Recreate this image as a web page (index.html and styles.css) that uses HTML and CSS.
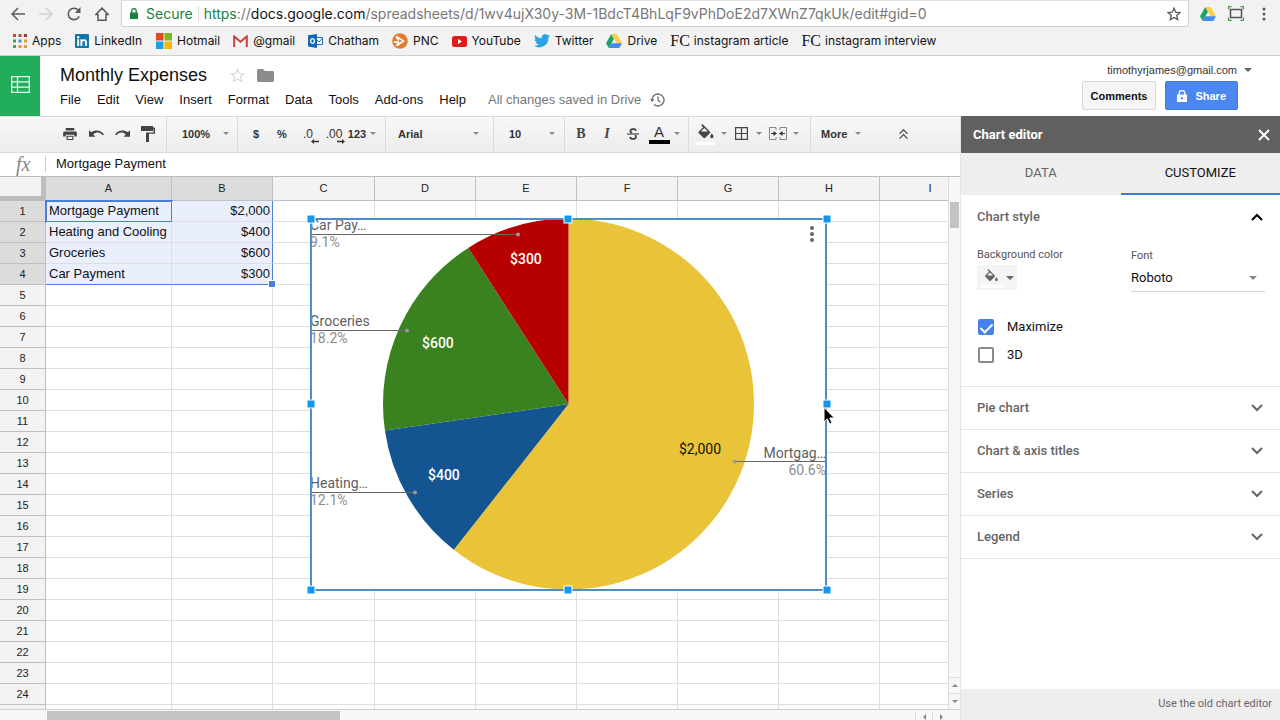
FILE: index.html
```html
<!DOCTYPE html>
<html lang="en">
<head>
<meta charset="utf-8">
<title>Monthly Expenses</title>
<link rel="stylesheet" href="styles.css">
</head>
<body>
<svg class="sprite" aria-hidden="true">
  <symbol id="i-drive" viewBox="0 0 16 14">
    <path fill="#1fa463" d="M5.3 0 0 9.2 2.7 14 8 4.7z"/>
    <path fill="#fdcf44" d="M5.3 0h5.4L16 9.2h-5.4z"/>
    <path fill="#4688f4" d="M2.7 14 5.4 9.2H16L13.3 14z"/>
  </symbol>
  <symbol id="i-down" viewBox="0 0 8 4"><path fill="currentColor" d="M0 0h8L4 4z"/></symbol>
  <symbol id="i-fill" viewBox="0 0 24 24"><path fill="currentColor" d="M16.6 9 7.6 0 6.200 1.400l2.400 2.400-5.200 5.100c-.6.6-.6 1.500 0 2.100l5.500 5.500c.3.3.7.5 1.100.5s.8-.2 1.100-.5l5.500-5.500c.5-.6.5-1.500 0-2zM5.800 9 10 4.800 14.200 9H5.800zM19 11.500s-2 2.200-2 3.500a2 2 0 0 0 4 0c0-1.300-2-3.500-2-3.500z"/></symbol>
  <symbol id="i-chev" viewBox="0 0 12 8"><path fill="none" stroke="currentColor" stroke-width="2" d="M1 1l5 5 5-5"/></symbol>
</svg>

<header class="browser">
  <div class="nav">
    <button class="plain" aria-label="Back"><svg width="14" height="14" viewBox="0 0 14 14"><path fill="none" stroke="#5a5a5a" stroke-width="1.500" d="M14 7H1M7 1 1 7l6 6"/></svg></button>
    <button class="plain" aria-label="Forward"><svg width="14" height="14" viewBox="0 0 14 14"><path fill="none" stroke="#d2d2d2" stroke-width="1.500" d="M0 7h13M7 1l6 6-6 6"/></svg></button>
    <button class="plain" aria-label="Reload"><svg width="14" height="14" viewBox="0 0 14 14"><path fill="none" stroke="#5a5a5a" stroke-width="1.600" d="M12.200 9.300A5.700 5.700 0 1 1 11.300 3.200"/><path fill="#5a5a5a" d="M13.500 0v6H7.800z"/></svg></button>
    <button class="plain" aria-label="Home"><svg width="14" height="14" viewBox="0 0 14 14"><path fill="none" stroke="#5a5a5a" stroke-width="1.500" d="M.8 7.600 7 1.200l6.200 6.400H11v5.600H3V7.600z"/></svg></button>
  </div>
  <div class="omnibox">
    <svg width="8" height="11" viewBox="0 0 8 11"><path fill="#1a8040" d="M0 4.500h8V11H0z"/><path fill="none" stroke="#1a8040" stroke-width="1.300" d="M1.800 5V2.800a2.200 2.200 0 0 1 4.400 0V5"/></svg>
    <span class="secure">Secure</span>
    <div class="url" role="textbox" contenteditable="true" aria-label="Address"><span class="scheme">https</span>://<span class="host">docs.google.com</span>/spreadsheets/d/1wv4ujX30y-3M-1BdcT4BhLqF9vPhDoE2d7XWnZ7qkUk/edit#gid=0</div>
    <button class="plain" aria-label="Bookmark this page"><svg width="14" height="14" viewBox="0 0 14 14"><path fill="none" stroke="#5a5a5a" stroke-width="1.300" d="M7 1.200l1.700 4 4.200.4-3.200 2.800 1 4.200L7 10.400l-3.700 2.200 1-4.200L1.100 5.600l4.200-.4z"/></svg></button>
  </div>
  <div class="extensions">
    <button class="plain" aria-label="Drive"><svg width="16" height="14"><use href="#i-drive"/></svg></button>
    <button class="plain" aria-label="Capture"><svg width="16" height="15" viewBox="0 0 16 15"><path fill="none" stroke="#555" stroke-width="1.500" d="M2.500 3.500h11v8h-11z"/><path fill="none" stroke="#3f9a3f" stroke-width="1.200" d="M.6 3.500V.6h3M12.400.6h3v2.900M.6 11.500v2.900h3M12.400 14.400h3v-2.900"/></svg></button>
    <button class="plain" aria-label="Browser menu"><svg width="4" height="14" viewBox="0 0 4 14"><g fill="#555"><circle cx="2" cy="2" r="1.500"/><circle cx="2" cy="7" r="1.500"/><circle cx="2" cy="12" r="1.500"/></g></svg></button>
  </div>
</header>

<nav class="bookmarks" aria-label="Bookmarks">
  <a href="#"><svg width="14" height="14" viewBox="0 0 14 14"><g fill="#d0453a"><path d="M0 0h3v3H0zM5.500 0h3v3h-3z"/><path fill="#a8323e" d="M11 0h3v3h-3z"/></g><path fill="#3f9f5f" d="M0 5.500h3v3H0z"/><path fill="#4a8ac6" d="M5.500 5.500h3v3h-3z"/><path fill="#e09a35" d="M11 5.500h3v3h-3zM5.500 11h3v3h-3zM11 11h3v3h-3z"/><path fill="#4f9f62" d="M0 11h3v3H0z"/></svg>Apps</a>
  <a href="#"><svg width="14" height="14" viewBox="0 0 14 14"><rect width="14" height="14" rx="1" fill="#0e76a8"/><path fill="#fff" d="M2.200 5.300h2V12h-2zM5.400 5.300h1.900v.9c.8-1.600 4.600-1.600 4.600 1.600V12h-2V8.400c0-2-2.500-1.900-2.500 0V12h-2z"/><circle cx="3.200" cy="3.200" r="1.200" fill="#fff"/></svg>LinkedIn</a>
  <a href="#"><svg width="16" height="16" viewBox="0 0 16 16"><path fill="#dd4b20" d="M0 0h7.500v7.500H0z"/><path fill="#7cb81e" d="M8.500 0H16v7.500H8.500z"/><path fill="#1ba1e2" d="M0 8.500h7.500V16H0z"/><path fill="#fbb506" d="M8.500 8.500H16V16H8.500z"/></svg>Hotmail</a>
  <a href="#"><svg width="15" height="12" viewBox="0 0 15 12"><path fill="#f4f4f4" d="M1 1h13v10H1z"/><path fill="none" stroke="#cf3d3a" stroke-width="2" d="M1.200 12V1.500l6.300 5.300 6.300-5.300V12"/></svg>@gmail</a>
  <a href="#"><svg width="15" height="14" viewBox="0 0 15 14"><path fill="#fff" stroke="#1a6fbd" d="M7 3.500h7.500v7H7z"/><path fill="none" stroke="#1a6fbd" d="M9 6l2 2 3.500-4"/><path fill="#1068b5" d="M0 1.300 9 0v14L0 12.500z"/><ellipse cx="4.500" cy="7" rx="1.900" ry="2.300" fill="none" stroke="#fff" stroke-width="1.300"/></svg>Chatham</a>
  <a href="#"><svg width="16" height="16" viewBox="0 0 16 16"><circle cx="8" cy="8" r="7.800" fill="#e27b2c"/><path fill="#fff" d="M4.500 2.800 13 8l-8 5.500-1.300-1.800L6.500 10H1.800V8.300h5L3.500 4.600z"/><path fill="#e27b2c" d="M6.800 6 10 8l-3 2z"/></svg>PNC</a>
  <a href="#"><svg width="15" height="11" viewBox="0 0 15 11"><rect width="15" height="11" rx="2.500" fill="#e01b1b"/><path fill="#fff" d="M6 3v5l4-2.500z"/></svg>YouTube</a>
  <a href="#"><svg width="16" height="14" viewBox="0 0 16 14"><path fill="#2aa3e8" d="M16 1.700c-.6.300-1.200.5-1.900.5.7-.4 1.200-1 1.400-1.800-.6.4-1.300.6-2.100.8A3.300 3.300 0 0 0 7.800 4.300C5.100 4.200 2.700 2.900 1.100.9c-.9 1.500-.4 3.400 1 4.400-.5 0-1-.2-1.500-.4 0 1.600 1.100 2.900 2.600 3.200-.5.100-1 .1-1.500 0 .4 1.300 1.600 2.300 3.100 2.300A6.600 6.600 0 0 1 0 11.800a9.300 9.300 0 0 0 14.400-8.300c.6-.5 1.200-1.100 1.600-1.800z"/></svg>Twitter</a>
  <a href="#"><svg width="16" height="14"><use href="#i-drive"/></svg>Drive</a>
  <a href="#"><span class="fc">FC</span>instagram article</a>
  <a href="#"><span class="fc">FC</span>instagram interview</a>
</nav>

<section class="doc">
  <a class="logo" href="#" aria-label="Sheets home"><svg width="19" height="17" viewBox="0 0 19 17"><path fill="none" stroke="#e8fff0" stroke-width="1.300" d="M.7.7h17.600v15.600H.7zM.7 5.900h17.600M.7 11.100h17.600M6.500.7v15.600"/></svg></a>
  <div class="doc-main">
    <div class="title-row">
      <input class="title" aria-label="Document title" value="Monthly Expenses">
      <button class="plain" aria-label="Star"><svg width="15" height="15" viewBox="0 0 14 14"><path fill="none" stroke="#d4d4d4" d="M7 1l1.500 4.200 4.500.2-3.500 2.800 1.200 4.400L7 10.100l-3.700 2.500 1.200-4.400L1 5.400l4.500-.2z"/></svg></button>
      <button class="plain" aria-label="Move to folder"><svg width="17" height="13" viewBox="0 0 17 13"><path fill="#8c8c8c" d="M1.500 0H6l2 2h7.500c.8 0 1.500.6 1.500 1.400v8.200c0 .8-.7 1.400-1.500 1.400h-14C.7 13 0 12.400 0 11.600V1.400C0 .6.700 0 1.500 0z"/></svg></button>
    </div>
    <div class="menus">
      <button class="plain">File</button><button class="plain">Edit</button><button class="plain">View</button><button class="plain">Insert</button><button class="plain">Format</button><button class="plain">Data</button><button class="plain">Tools</button><button class="plain">Add-ons</button><button class="plain">Help</button>
      <span class="saved">All changes saved in Drive <svg width="15" height="14" viewBox="0 0 15 14"><path fill="none" stroke="#6b6b6b" stroke-width="1.300" d="M2 7.500a6 6 0 1 1 2 4M8 3.500V7.200l2.500 2"/><path fill="#6b6b6b" d="M0 6.200h4.500L2.200 9z"/></svg></span>
    </div>
  </div>
  <div class="account">
    <button class="plain email">timothyrjames@gmail.com<svg width="8" height="4"><use href="#i-down"/></svg></button>
    <div class="account-actions">
      <button class="btn">Comments</button>
      <button class="btn share"><svg width="10" height="12" viewBox="0 0 10 12"><path fill="#fff" fill-rule="evenodd" d="M0 4.500h10V12H0zM5 7a1.200 1.200 0 1 0 .1 0z"/><path fill="none" stroke="#fff" stroke-width="1.300" d="M2.200 5V3.200a2.800 2.500 0 0 1 5.600 0V5"/></svg>Share</button>
    </div>
  </div>
</section>

<main class="work">
  <section class="editor">
    <div class="toolbar" role="toolbar">
      <div class="group g-edit">
        <button class="tool" aria-label="Print"><svg width="14" height="12" viewBox="0 0 16 14"><path fill="#444" fill-rule="evenodd" d="M3 0h10v3H3zM1.500 4h13C15.300 4 16 4.700 16 5.500V10h-3V8H3v2H0V5.500C0 4.700.7 4 1.500 4zM4 9h8v5H4zM5.300 10.200v2.500h5.400v-2.500z"/></svg></button>
        <button class="tool" aria-label="Undo"><svg width="15" height="8" viewBox="0 0 16 8"><path fill="#444" d="M0 0l2.200 2.200C6.500-1 13-.5 16 4.600l-1.600.7C12 1.800 7.600 1.300 4.500 4.500L7 7H0z"/></svg></button>
        <button class="tool" aria-label="Redo"><svg width="15" height="8" viewBox="0 0 16 8"><path fill="#444" d="M16 0l-2.200 2.200C9.500-1 3-.5 0 4.600l1.600.7C4 1.800 8.400 1.300 11.500 4.500L9 7h7z"/></svg></button>
        <button class="tool" aria-label="Paint format"><svg width="14" height="16" viewBox="0 0 14 16"><path fill="#444" d="M0 0h12v1.500h2v6.300H8V16H5V6.500h7.500V3H12v2H0z"/></svg></button>
      </div>
      <div class="group g-zoom">
        <label class="pick"><select aria-label="Zoom"><option>100%</option></select><svg width="6" height="3"><use href="#i-down"/></svg></label>
      </div>
      <div class="group g-num">
        <button class="tool">$</button>
        <button class="tool">%</button>
        <button class="tool dec">.0<svg width="8" height="5" viewBox="0 0 8 5"><path fill="#333" d="M0 2.500 3 0v1.800h5v1.400H3V5z"/></svg></button>
        <button class="tool dec">.00<svg width="8" height="5" viewBox="0 0 8 5"><path fill="#333" d="M8 2.500 5 0v1.800H0v1.400h5V5z"/></svg></button>
        <button class="tool wide">123<svg width="6" height="3"><use href="#i-down"/></svg></button>
      </div>
      <div class="group g-font">
        <label class="pick"><select aria-label="Font"><option>Arial</option></select><svg width="6" height="3"><use href="#i-down"/></svg></label>
      </div>
      <div class="group g-size">
        <label class="pick"><select aria-label="Font size"><option>10</option></select><svg width="6" height="3"><use href="#i-down"/></svg></label>
      </div>
      <div class="group g-style">
        <button class="tool serif" aria-label="Bold">B</button>
        <button class="tool serif" aria-label="Italic"><i>I</i></button>
        <button class="tool" aria-label="Strikethrough"><svg width="12" height="12" viewBox="0 0 12 12"><path fill="none" stroke="#444" stroke-width="1.800" d="M9 2.800C8.300.4 3.300.4 3.300 3c0 1 .9 1.500 1.700 1.800M3 9c.6 2.600 6 2.600 6 0 0-.8-.4-1.300-1-1.700"/><path stroke="#444" stroke-width="1.200" d="M0 6h12"/></svg></button>
        <button class="tool color"><span>A</span></button>
        <button class="tool tiny" aria-label="Text color options"><svg width="6" height="3"><use href="#i-down"/></svg></button>
      </div>
      <div class="group g-cell">
        <button class="tool fill" aria-label="Fill color"><svg width="20" height="20"><use href="#i-fill"/></svg></button>
        <button class="tool tiny" aria-label="Fill options"><svg width="6" height="3"><use href="#i-down"/></svg></button>
        <button class="tool" aria-label="Borders"><svg width="13" height="13" viewBox="0 0 13 13"><path fill="none" stroke="#444" stroke-width="1.200" d="M.6.6h11.800v11.800H.6zM6.500.6v11.800M.6 6.500h11.800"/></svg></button>
        <button class="tool tiny" aria-label="Border options"><svg width="6" height="3"><use href="#i-down"/></svg></button>
        <button class="tool merge" aria-label="Merge cells"><svg width="18" height="13" viewBox="0 0 18 13"><path fill="none" stroke="#888" d="M7 3V.5H.5v12H7V10M11 3V.5h6.500v12H11V10"/><path fill="#333" d="M2 6h2.500V4L8 6.500 4.500 9V7H2zM16 6h-2.500V4L10 6.500 13.500 9V7H16z"/></svg></button>
        <button class="tool tiny" aria-label="Merge options"><svg width="6" height="3"><use href="#i-down"/></svg></button>
      </div>
      <div class="group g-more">
        <button class="tool more">More<svg width="6" height="3"><use href="#i-down"/></svg></button>
        <button class="tool" aria-label="Hide menus"><svg width="9" height="10" viewBox="0 0 9 10"><path fill="none" stroke="#444" stroke-width="1.200" d="M.5 4.800l4-4 4 4M.5 9.600l4-4 4 4"/></svg></button>
      </div>
    </div>

    <div class="formula">
      <span class="fx">fx</span>
      <input aria-label="Formula" value="Mortgage Payment">
    </div>

    <div class="sheet">
      <div class="cells">
        <table>
          <colgroup><col class="c-num"><col class="c-a"><col class="c-b"><col class="c-c"><col class="c"><col class="c"><col class="c"><col class="c"><col class="c"><col></colgroup>
          <thead><tr><th class="corner"></th><th class="on">A</th><th class="on">B</th><th>C</th><th>D</th><th>E</th><th>F</th><th>G</th><th>H</th><th class="last">I</th></tr></thead>
          <tbody>
            <tr class="sel"><th>1</th><td class="active">Mortgage Payment</td><td class="num">$2,000</td><td></td><td></td><td></td><td></td><td></td><td></td><td></td></tr>
            <tr class="sel"><th>2</th><td>Heating and Cooling</td><td class="num">$400</td><td></td><td></td><td></td><td></td><td></td><td></td><td></td></tr>
            <tr class="sel"><th>3</th><td>Groceries</td><td class="num">$600</td><td></td><td></td><td></td><td></td><td></td><td></td><td></td></tr>
            <tr class="sel end"><th>4</th><td>Car Payment</td><td class="num">$300<span class="grip"></span></td><td></td><td></td><td></td><td></td><td></td><td></td><td></td></tr>
            <tr><th>5</th><td></td><td></td><td></td><td></td><td></td><td></td><td></td><td></td><td></td></tr>
            <tr><th>6</th><td></td><td></td><td></td><td></td><td></td><td></td><td></td><td></td><td></td></tr>
            <tr><th>7</th><td></td><td></td><td></td><td></td><td></td><td></td><td></td><td></td><td></td></tr>
            <tr><th>8</th><td></td><td></td><td></td><td></td><td></td><td></td><td></td><td></td><td></td></tr>
            <tr><th>9</th><td></td><td></td><td></td><td></td><td></td><td></td><td></td><td></td><td></td></tr>
            <tr><th>10</th><td></td><td></td><td></td><td></td><td></td><td></td><td></td><td></td><td></td></tr>
            <tr><th>11</th><td></td><td></td><td></td><td></td><td></td><td></td><td></td><td></td><td></td></tr>
            <tr><th>12</th><td></td><td></td><td></td><td></td><td></td><td></td><td></td><td></td><td></td></tr>
            <tr><th>13</th><td></td><td></td><td></td><td></td><td></td><td></td><td></td><td></td><td></td></tr>
            <tr><th>14</th><td></td><td></td><td></td><td></td><td></td><td></td><td></td><td></td><td></td></tr>
            <tr><th>15</th><td></td><td></td><td></td><td></td><td></td><td></td><td></td><td></td><td></td></tr>
            <tr><th>16</th><td></td><td></td><td></td><td></td><td></td><td></td><td></td><td></td><td></td></tr>
            <tr><th>17</th><td></td><td></td><td></td><td></td><td></td><td></td><td></td><td></td><td></td></tr>
            <tr><th>18</th><td></td><td></td><td></td><td></td><td></td><td></td><td></td><td></td><td></td></tr>
            <tr><th>19</th><td></td><td></td><td></td><td></td><td></td><td></td><td></td><td></td><td></td></tr>
            <tr><th>20</th><td></td><td></td><td></td><td></td><td></td><td></td><td></td><td></td><td></td></tr>
            <tr><th>21</th><td></td><td></td><td></td><td></td><td></td><td></td><td></td><td></td><td></td></tr>
            <tr><th>22</th><td></td><td></td><td></td><td></td><td></td><td></td><td></td><td></td><td></td></tr>
            <tr><th>23</th><td></td><td></td><td></td><td></td><td></td><td></td><td></td><td></td><td></td></tr>
            <tr><th>24</th><td></td><td></td><td></td><td></td><td></td><td></td><td></td><td></td><td></td></tr>
            <tr><th></th><td></td><td></td><td></td><td></td><td></td><td></td><td></td><td></td><td></td></tr>
          </tbody>
        </table>

        <svg class="chart" width="517" height="373" viewBox="0 0 517 373" role="img" aria-label="Monthly expenses pie chart">
          <rect width="517" height="373" fill="#fff"/>
          <path fill="#e9c439" d="M258.500 186V.5A185.500 185.500 0 1 1 143.800 331.800z"/>
          <path fill="#135491" d="M258.500 186 143.800 331.800A185.500 185.500 0 0 1 74.900 212.400z"/>
          <path fill="#3a811f" d="M258.500 186 74.900 212.400A185.500 185.500 0 0 1 158.200 29.900z"/>
          <path fill="#b70000" d="M258.500 186 158.200 29.900A185.500 185.500 0 0 1 258.500.5z"/>
          <g class="lead">
            <path d="M0 16.500h208M0 112.500h97M0 274.500h105M425 243.500h92"/>
            <circle cx="208" cy="16.500" r="2"/><circle cx="97" cy="112.500" r="2"/><circle cx="105" cy="274.500" r="2"/><circle cx="425" cy="243.500" r="2"/>
          </g>
          <g class="name">
            <text x="0" y="12">Car Pay…</text><text x="0" y="108">Groceries</text><text x="0" y="270">Heating…</text><text x="516" y="240" text-anchor="end">Mortgag…</text>
          </g>
          <g class="pct">
            <text x="0" y="29">9.1%</text><text x="0" y="125">18.2%</text><text x="0" y="287">12.1%</text><text x="516" y="257" text-anchor="end">60.6%</text>
          </g>
          <g class="val">
            <text x="200" y="46">$300</text><text x="112" y="130">$600</text><text x="118" y="262">$400</text><text class="dark" x="369" y="236">$2,000</text>
          </g>
          <g fill="#666"><circle cx="502" cy="10" r="2"/><circle cx="502" cy="16" r="2"/><circle cx="502" cy="22" r="2"/></g>
          <rect x="1" y="1" width="515" height="371" fill="none" stroke="#4d8fc4" stroke-width="2"/>
          <g class="handles">
            <rect x="-3" y="-3" width="8" height="8"/><rect x="254" y="-3" width="8" height="8"/><rect x="513" y="-3" width="8" height="8"/>
            <rect x="-3" y="182" width="8" height="8"/><rect x="513" y="182" width="8" height="8"/>
            <rect x="-3" y="368" width="8" height="8"/><rect x="254" y="368" width="8" height="8"/><rect x="513" y="368" width="8" height="8"/>
          </g>
          <path fill="#000" stroke="#fff" d="M514 189.500v14.500l3.400-3.100 2.300 5.300 2.400-1-2.300-5.200h4.700z"/>
        </svg>
      </div>
      <div class="vscroll"><div class="thumb-v"></div><button class="sb" aria-label="Scroll up"><svg width="6" height="3" viewBox="0 0 6 3"><path fill="#888" d="M0 3 3 0l3 3z"/></svg></button><button class="sb" aria-label="Scroll down"><svg width="6" height="3"><use href="#i-down"/></svg></button></div>
    </div>
    <div class="hscroll"><div class="thumb-h"></div><button class="sb" aria-label="Scroll left"><svg width="3" height="6" viewBox="0 0 3 6"><path fill="#888" d="M3 0 0 3l3 3z"/></svg></button><button class="sb" aria-label="Scroll right"><svg width="3" height="6" viewBox="0 0 3 6"><path fill="#888" d="M0 0l3 3-3 3z"/></svg></button></div>
  </section>

  <aside class="panel">
    <header class="panel-head"><h2>Chart editor</h2><button class="plain" aria-label="Close"><svg width="12" height="12" viewBox="0 0 12 12"><path stroke="#fff" stroke-width="2" d="M1 1l10 10M11 1 1 11"/></svg></button></header>
    <div class="tabs" role="tablist"><button role="tab">DATA</button><button role="tab" class="current" aria-selected="true">CUSTOMIZE</button></div>
    <section class="style">
      <button class="fold open">Chart style<svg width="12" height="8" viewBox="0 0 12 8"><path fill="none" stroke="#000" stroke-width="2" d="M1 7l5-5 5 5"/></svg></button>
      <div class="fields">
        <div class="field">
          <span id="bg-label" class="label">Background color</span>
          <button class="swatch" aria-labelledby="bg-label"><svg width="17" height="17"><use href="#i-fill"/></svg><svg width="8" height="4"><use href="#i-down"/></svg></button>
        </div>
        <div class="field">
          <label class="label" for="font">Font</label>
          <div class="select"><select id="font"><option>Roboto</option></select><svg width="8" height="4"><use href="#i-down"/></svg></div>
        </div>
      </div>
      <label class="check"><input type="checkbox" checked>Maximize</label>
      <label class="check"><input type="checkbox">3D</label>
    </section>
    <button class="fold">Pie chart<svg width="12" height="8"><use href="#i-chev"/></svg></button>
    <button class="fold">Chart &amp; axis titles<svg width="12" height="8"><use href="#i-chev"/></svg></button>
    <button class="fold">Series<svg width="12" height="8"><use href="#i-chev"/></svg></button>
    <button class="fold">Legend<svg width="12" height="8"><use href="#i-chev"/></svg></button>
    <footer><a href="#">Use the old chart editor</a></footer>
  </aside>
</main>
</body>
</html>
```

FILE: styles.css
```css
* { box-sizing: border-box; }
body { margin: 0; height: 100vh; overflow: hidden; display: flex; flex-direction: column; background: #fff; color: #111; font: 13px/16px "Liberation Sans", Arial, sans-serif; }
button, input, select { font: inherit; color: inherit; }
button, select { padding: 0; border: 0; background: none; cursor: pointer; }
select { appearance: none; }
svg { display: block; flex: none; }
a { color: inherit; text-decoration: none; }
.sprite { position: absolute; width: 0; height: 0; }
.plain { display: flex; align-items: center; }

.browser { flex: none; display: flex; height: 27px; background: #f2f2f2; font-family: Inter, sans-serif; }
.nav { display: flex; align-items: center; gap: 14px; padding-left: 11px; width: 121px; flex: none; }
.omnibox { flex: 1; min-width: 0; display: flex; align-items: center; padding: 0 7px 0 8px; background: #fff; border: 1px solid #d0d0d0; border-top-color: #e0e0e0; border-radius: 0 0 3px 3px; font-size: 14px; }
.secure { color: #1a8040; margin-left: 8px; padding-right: 5px; border-right: 1px solid #ddd; }
.url { flex: 1; min-width: 0; overflow: hidden; white-space: nowrap; padding-left: 5px; color: #777; }
.scheme { color: #1a8040; }
.host { color: #111; }
.extensions { display: flex; align-items: center; gap: 12px; width: 91px; flex: none; padding-left: 11px; }
.extensions .plain:last-child { margin-left: 6px; }

.bookmarks { flex: none; display: flex; align-items: center; gap: 13px; height: 29px; padding-left: 13px; background: #f2f2f2; border-bottom: 1px solid #cfcfcf; font: 12px/16px Inter, sans-serif; white-space: nowrap; }
.bookmarks a { display: flex; align-items: center; gap: 5px; }
.bookmarks a:nth-child(-n+2) { margin-right: 1px; }
.fc { font: 16px/16px "Liberation Serif", serif; }
.bookmarks a:has(.fc) { gap: 4px; }

.doc { flex: none; display: flex; height: 60px; }
.logo { width: 40px; padding-bottom: 4px; background: #21ad5b; display: flex; align-items: center; justify-content: center; }
.doc-main { flex: 1; padding: 7px 0 0 20px; }
.title-row { display: flex; align-items: center; height: 24px; }
.title { width: 170px; height: 24px; padding: 0; border: 0; font-size: 18px; line-height: 24px; }
.title-row .plain + .plain { margin-left: 12px; }
.menus { display: flex; align-items: center; gap: 16px; margin-top: 5px; }
.saved { display: flex; align-items: center; gap: 9px; margin-left: 6px; color: #777; }
.account { padding: 6px 28px 0 0; display: flex; flex-direction: column; align-items: flex-end; }
.email { gap: 7px; font-size: 11px; color: #333; }
.email svg { color: #666; }
.account-actions { display: flex; gap: 9px; margin: 3px 14px 0 0; }
.btn { height: 29px; padding: 0 8px; border: 1px solid #d8d8d8; border-radius: 2px; background: #f5f5f5; font-size: 11px; font-weight: bold; }
.share { display: flex; align-items: center; gap: 8px; padding: 0 11px; background: #4b87ee; border-color: #3f79e4; color: #fff; }

.work { flex: 1; min-height: 0; display: flex; }
.editor { flex: 1; min-width: 0; display: flex; flex-direction: column; border-right: 1px solid #e4e4e4; }
.toolbar { flex: none; display: flex; height: 37px; border: solid #dadada; border-width: 1px 0; background: linear-gradient(#f8f8f8, #ececec); font-size: 11px; font-weight: bold; color: #333; }
.group { flex: none; display: flex; align-items: center; padding-bottom: 2px; border-right: 1px solid #dadada; }
.group svg use { color: #888; }
.group .fill svg use { color: #444; }
.g-edit { width: 167px; padding-left: 57px; }
.g-zoom { width: 71px; padding-left: 15px; padding-right: 8px; }
.g-num { width: 148px; padding-left: 5px; }
.g-font { width: 108px; padding-left: 12px; padding-right: 14px; }
.g-size { width: 71px; padding-left: 15px; padding-right: 9px; }
.g-style { width: 124px; padding-left: 3px; }
.g-cell { width: 122px; padding-left: 4px; }
.g-more { flex: 1; border: 0; padding-left: 10px; }
.pick { flex: 1; display: flex; align-items: center; justify-content: space-between; }
.pick select { flex: 1; min-width: 0; font-weight: bold; }
.tool { width: 26px; height: 26px; display: flex; align-items: center; justify-content: center; position: relative; flex: none; }
.dec svg { position: absolute; right: 2px; bottom: 3px; }
.dec { font-size: 12px; font-weight: normal; }
.wide { width: 30px; gap: 4px; }
.serif { font: bold 14px/20px "Liberation Serif", serif; color: #444; }
.color span { width: 21px; border-bottom: 4px solid #000; font: 15px/17px "Liberation Sans", sans-serif; }
.tiny { width: 9px; }
.fill::after { content: ""; position: absolute; left: 2px; bottom: 2px; width: 20px; height: 3px; background: #fff; }
.merge { margin-left: 2px; }
.more { width: 39px; gap: 8px; margin-right: 30px; justify-content: flex-start; }

.formula { flex: none; display: flex; align-items: center; height: 23px; padding-bottom: 2px; }
.fx { width: 46px; padding-left: 16px; border-right: 1px solid #ccc; font: italic 20px/16px "Liberation Serif", serif; color: #888; }
.formula input { flex: 1; min-width: 0; padding: 0; border: 0; margin-left: 10px; height: 20px; }

.sheet { flex: 1; min-height: 0; display: flex; border-top: 1px solid #bbb; }
.cells { flex: 1; min-width: 0; overflow: hidden; position: relative; border-right: 1px solid #dcdcdc; }
table { width: 100%; table-layout: fixed; border-spacing: 0; }
.c-num { width: 46px; }
.c-a { width: 126px; }
.c-b, .c { width: 101px; }
.c-c { width: 102px; }
th { height: 21px; padding: 0; background: #f3f3f3; border: solid #c0c0c0; border-width: 0 1px 1px 0; font-size: 11px; line-height: 16px; font-weight: normal; color: #222; }
thead th { height: 24px; padding-bottom: 1px; }
thead .last { padding-left: 32px; border-right: 0; }
.corner { border: solid #bdbdbd; border-width: 0 5px 5px 0; }
.on, .sel th { background: #dcdcdc; }
td { height: 21px; padding: 0 2px 0 3px; border: solid #dedede; border-width: 0 1px 1px 0; white-space: nowrap; line-height: 16px; position: relative; }
td:last-child { border-right: 0; }
.sel td:nth-child(-n+3) { background: #e9effd; }
.sel .num { text-align: right; border-right-color: #4a7fdc; }
.end td:nth-child(-n+3) { border-bottom-color: #4a7fdc; }
.active { outline: 2px solid #4a7fdc; outline-offset: -1px; }
.grip { position: absolute; right: -3px; bottom: -3px; width: 6px; height: 6px; background: #4a7fdc; outline: 1px solid #fff; z-index: 1; }

.chart { position: absolute; left: 310px; top: 41px; overflow: visible; font-family: Roboto, sans-serif; font-size: 14px; }
.lead path { stroke: #666; fill: none; }
.lead circle { fill: #999; }
.name { fill: #5f5f5f; }
.pct { fill: #8c8c8c; }
.val { fill: #fff; font-weight: 500; }
.val .dark { fill: #111; font-weight: 400; }
.handles { fill: #1297f0; stroke: #fff; }

.vscroll { width: 11px; flex: none; display: flex; flex-direction: column; padding-top: 25px; background: #f7f7f7; }
.thumb-v { width: 9px; height: 26px; margin: 0 1px auto; background: #c3c3c3; }
.sb { display: flex; align-items: center; justify-content: center; color: #888; border: solid #ddd; border-width: 1px 0 0; height: 16px; flex: none; }
.hscroll { flex: none; display: flex; height: 11px; border-top: 1px solid #d0d0d0; background: #f8f8f8; padding: 1px 11px 0 47px; }
.thumb-h { width: 293px; margin-right: auto; background: #c3c3c3; }
.hscroll .sb { width: 17px; height: 11px; border-width: 0 0 0 1px; }

.panel { flex: none; width: 319px; display: flex; flex-direction: column; font: 14px/20px Roboto, sans-serif; }
.panel-head { display: flex; align-items: center; justify-content: space-between; height: 37px; padding: 0 10px 0 12px; background: #606060; color: #fff; }
h2 { margin: 0; font-size: 13px; line-height: 20px; font-weight: 700; }
.tabs { display: flex; height: 42px; background: #eee; color: #666; font-size: 13px; }
.tabs button { flex: 1; border-bottom: 2px solid transparent; }
.tabs .current { color: #111; border-color: #3f78d8; }
.fold { display: flex; align-items: center; justify-content: space-between; width: 100%; height: 43px; padding: 0 17px 0 16px; border-bottom: 1px solid #e4e4e4; font-size: 13px; font-weight: 500; color: #666; text-align: left; }
.open { border: 0; }
.style { height: 192px; border-bottom: 1px solid #e4e4e4; }
.fields { display: flex; justify-content: space-between; padding: 7px 15px 0 16px; }
.field { display: flex; flex-direction: column; align-items: flex-start; }
.label { font-size: 11px; line-height: 20px; color: #555; }
.field + .field .label { padding-top: 1px; line-height: 19px; }
.swatch { display: flex; align-items: center; gap: 6px; width: 40px; height: 25px; padding-left: 6px; background: #f4f4f4; position: relative; }
.swatch::after { content: ""; position: absolute; left: 4px; bottom: 2px; width: 23px; height: 3px; background: #fff; }
.swatch use { color: #666; }
.select { display: flex; align-items: center; width: 134px; height: 27px; padding-right: 8px; border-bottom: 1px solid #d4d4d4; color: #888; }
.select select { flex: 1; height: 24px; color: #111; font-size: 13px; }
.check { display: flex; align-items: center; gap: 13px; height: 28px; padding-left: 17px; font-size: 13px; }
.fields + .check { margin-top: 21px; }
.check input { appearance: none; width: 16px; height: 16px; margin: 0; border: 2px solid #8a8a8a; border-radius: 2px; }
.check input:checked { display: flex; justify-content: center; background: #4680ea; border-color: #4680ea; }
.check input:checked::after { content: ""; width: 5px; height: 10px; border: solid #fff; border-width: 0 2px 2px 0; transform: rotate(45deg); }
footer { margin-top: auto; height: 31px; padding: 5px 8px; background: #eee; color: #666; font-size: 11px; text-align: right; }
```
